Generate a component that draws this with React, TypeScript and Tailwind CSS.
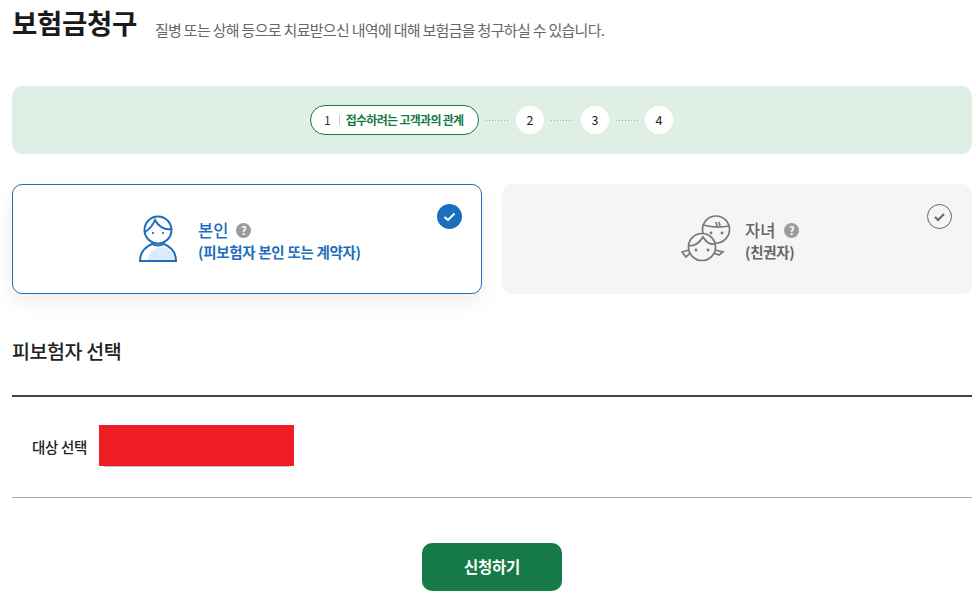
import React from 'react';

const font = { fontFamily: '"Noto Sans CJK KR", "Noto Sans", sans-serif' };

function Dots() {
  return <span className="w-[23px] h-px bg-[repeating-linear-gradient(90deg,#aaa_0_1px,transparent_1px_3px)]" />;
}

function StepNum({ n }: { n: number }) {
  return (
    <span className="w-[28px] h-[28px] rounded-full bg-white flex items-center justify-center text-[12.5px] text-[#222]">
      {n}
    </span>
  );
}

function Help() {
  return (
    <span className="w-[15px] h-[15px] rounded-full bg-[#9b9b9b] text-white text-[11px] font-bold flex items-center justify-center leading-none">
      ?
    </span>
  );
}

function PersonIcon() {
  return (
    <svg width="40" height="48" viewBox="0 0 40 48" fill="none" stroke="#1b6fbd" strokeWidth="2">
      <path d="M10 46 C10 38 15 33 24 32 C31 33 36 38 37 46 Z" fill="#dcebfb" stroke="none" />
      <circle cx="20" cy="15" r="13.5" fill="none" />
      <path d="M7 17 C12 14 15 10 17 5 C20 11 26 15 33 14" />
      <path d="M2 46 C2 37 7 32 14 29 C17 31 23 31 26 29 C33 32 38 37 38 46" />
      <path d="M1 46 H39" />
      <circle cx="15" cy="18" r="0.7" fill="#1b6fbd" strokeWidth="1" />
      <circle cx="25" cy="18" r="0.7" fill="#1b6fbd" strokeWidth="1" />
    </svg>
  );
}

function KidsIcon() {
  return (
    <svg width="50" height="48" viewBox="0 0 50 48" fill="none" stroke="#777" strokeWidth="1.7">
      <circle cx="35" cy="14.5" r="13.5" />
      <path d="M22 10 C29 12 38 13 48 11" />
      <path d="M35 7 L36 11 M38 7 L39 11" />
      <circle cx="30" cy="18" r="0.6" fill="#777" />
      <circle cx="41" cy="18" r="0.6" fill="#777" />
      <circle cx="21" cy="32" r="13.5" fill="#f5f5f5" />
      <path d="M8 31 C14 31 19 27 22 22 C25 27 29 30 34 29" />
      <path d="M8 35 L1 37 L5 42 L9 38" />
      <path d="M34 35 L42 37 L38 40 L33 38" />
      <circle cx="15" cy="35" r="0.6" fill="#777" />
      <circle cx="27" cy="35" r="0.6" fill="#777" />
    </svg>
  );
}

export default function App() {
  return (
    <div className="w-[976px] h-[595px] overflow-hidden bg-white px-3 relative" style={font}>
      <div className="flex items-end h-[41px] pt-1">
        <h1 className="text-[27.5px] font-bold text-[#1a1a1a] tracking-[-0.3px] leading-[38px]">보험금청구</h1>
        <p className="ml-[18px] text-[15px] text-[#666] tracking-[-0.7px] leading-[20px] mb-[1px]">
          질병 또는 상해 등으로 치료받으신 내역에 대해 보험금을 청구하실 수 있습니다.
        </p>
      </div>

      <div className="mt-[45px] w-[960px] h-[68px] rounded-[10px] bg-[#e0efe6] flex items-center justify-center gap-[7px] pr-[1px]">
        <div className="h-[30px] w-[169px] rounded-full border border-[#157a45] bg-white flex items-center pl-[13px]">
          <span className="text-[12px] text-[#333]">1</span>
          <span className="ml-[8px] h-[10px] border-l border-[#ccc]" />
          <span className="ml-[6px] text-[12px] font-bold text-[#157a45] tracking-[-0.7px]">접수하려는 고객과의 관계</span>
        </div>
        <Dots />
        <StepNum n={2} />
        <Dots />
        <StepNum n={3} />
        <Dots />
        <span className="-ml-px">
          <StepNum n={4} />
        </span>
      </div>

      <div className="mt-[30px] flex w-[960px] gap-[20px]">
        <div className="relative w-[470px] h-[110px] rounded-[10px] border border-[#1b6fbd] bg-white shadow-[0_8px_20px_rgba(0,0,0,0.07)] flex items-center pl-[125px]">
          <PersonIcon />
          <div className="ml-[20px] pt-[4px]">
            <div className="flex items-center gap-[8px]">
              <span className="text-[16.5px] font-medium text-[#1b6fbd] leading-[22px]">본인</span>
              <Help />
            </div>
            <div className="text-[14.5px] font-bold text-[#1b6fbd] tracking-[-0.3px] leading-[22px]">(피보험자 본인 또는 계약자)</div>
          </div>
          <span className="absolute right-[19px] top-[19px] w-[25px] h-[25px] rounded-full bg-[#1b6fbd] flex items-center justify-center">
            <svg width="13" height="10" viewBox="0 0 13 10" fill="none" stroke="#fff" strokeWidth="2"><path d="M1.5 5 L5 8 L11.5 1.5" /></svg>
          </span>
        </div>
        <div className="relative w-[470px] h-[110px] rounded-[10px] bg-[#f5f5f5] flex items-center pl-[179px]">
          <KidsIcon />
          <div className="ml-[14px] pt-[4px]">
            <div className="flex items-center gap-[9px]">
              <span className="text-[16.5px] font-medium text-[#666] leading-[22px]">자녀</span>
              <Help />
            </div>
            <div className="text-[14.5px] font-bold text-[#666] tracking-[-0.3px] leading-[22px]">(친권자)</div>
          </div>
          <span className="absolute right-[20px] top-[20px] w-[25px] h-[25px] rounded-full border border-[#666] flex items-center justify-center">
            <svg width="13" height="10" viewBox="0 0 13 10" fill="none" stroke="#666" strokeWidth="2"><path d="M2 5 L5 8 L11 2" /></svg>
          </span>
        </div>
      </div>

      <h2 className="mt-[42px] text-[19.5px] font-medium text-[#222] tracking-[-0.4px] leading-[30px]">피보험자 선택</h2>

      <div className="mt-[29px] w-[960px] border-t-2 border-[#444] border-b border-b-[#aaa] h-[103px] flex items-center pl-[20px]">
        <span className="w-[67px] text-[14.5px] font-medium text-[#222] tracking-[-0.3px]">대상 선택</span>
        <div className="w-[195px] mt-[-2px]">
          <div className="h-[41px] bg-[#ee1c25]" />
          <div className="mx-[5px] h-px bg-[#bbb]" />
        </div>
      </div>

      <div className="mt-[45px] w-[960px] flex justify-center">
        <button className="w-[140px] h-[48px] rounded-[10px] bg-[#157a45] text-white text-[15.5px] font-bold tracking-[-0.3px]">신청하기</button>
      </div>
    </div>
  );
}
